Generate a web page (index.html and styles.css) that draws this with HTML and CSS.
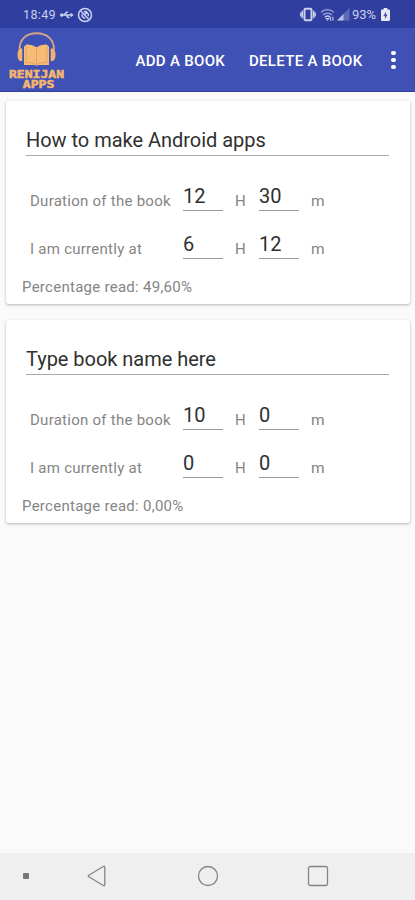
FILE: index.html
```html
<!DOCTYPE html>
<html lang="en">
<head>
<meta charset="utf-8">
<meta name="viewport" content="width=device-width">
<title>Book progress</title>
<link rel="stylesheet" href="styles.css">
</head>
<body>
<div class="screen">
  <header class="status">
    <span class="clock">18:49</span>
    <svg class="usb" width="14" height="12" viewBox="0 0 14 12" fill="none" stroke="currentColor" stroke-width="1.4"><path d="M2 6h9M4 6l2.500-2.800h1.500M6 6l2 2.500h1.500"/><circle cx="1.800" cy="6" r="1.100" fill="currentColor"/><path d="M10.500 3.800 13.800 6l-3.300 2.200z" fill="currentColor" stroke="none"/></svg>
    <svg class="nosync" width="16" height="16" viewBox="0 0 16 16" fill="none" stroke="currentColor" stroke-width="1.500"><circle cx="8" cy="8" r="6.500"/><path d="M4 4.300 11.500 12M5 7.400a3.300 3.300 0 0 0 3.200 3.800M7 4.800a3.400 3.400 0 0 1 4.200 4.400M7.500 7.200 9.800 6"/></svg>
    <span class="gap"></span>
    <svg class="vibrate" width="16" height="15" viewBox="0 0 16 15" fill="none" stroke="currentColor"><rect x="4.500" y="1.800" width="7" height="11.400" rx="1" stroke-width="2"/><path d="M2.300 3.800v7.400M13.700 3.800v7.400M.8 5.500v4M15.200 5.500v4" stroke-width="1.400"/></svg>
    <svg class="wifi" width="15" height="14" viewBox="0 0 15 14" fill="none" stroke="currentColor" stroke-width="1.300"><path d="M1 4.400a9.200 9.200 0 0 1 13 0M3 7a6.400 6.400 0 0 1 9 0" opacity=".7"/><path d="M5 9.200a3.600 3.600 0 0 1 5 0"/><path d="m6 10.500 1.500 2 1.500-2zM10.700 8.800v4M12.900 8.800v4" stroke-width="1"/></svg>
    <svg class="signal" width="13" height="13" viewBox="0 0 13 13" fill="currentColor"><path d="M0 12.500 12.500 0v12.500z" opacity=".3"/><path d="M0 12.500 6.500 6v6.500z" opacity=".85"/></svg>
    <span class="percent">93%</span>
    <svg class="battery" width="9" height="13" viewBox="0 0 9 13"><path d="M2.700 0h3.600v1.400h1.500Q9 1.400 9 2.600v9Q9 13 7.800 13H1.200Q0 13 0 11.700V2.600Q0 1.400 1.200 1.400h1.500z" fill="currentColor"/><path d="M5.300 3.500 2.400 7.700h1.700L3.700 11l2.900-4.200H4.900z" fill="#303f9f"/></svg>
  </header>
  <nav class="toolbar">
    <svg class="logo" width="60" height="62" viewBox="0 0 60 62">
      <path d="M11.500 20.500C11.500 10.500 18 4.300 28.500 4.300S46 10.500 46 20.500" fill="none" stroke="#d6a487" stroke-width="1.900"/>
      <path d="M12 19.500h2.300v12.500H12Q9.500 30.500 9.500 25.700t2.500-6.200zM45 19.500h-2.300v12.500H45q2.500-1.500 2.500-6.300t-2.500-6.200z" fill="#efb471"/>
      <path d="M16 17.800 18.500 15.500q5.500-.4 10 2.800Q33 15.100 38.500 15.500l2.500 2.300V36H30.500q-2 1.200-4 0H16z" fill="#f7bc73"/>
      <path d="M28.500 18.800v16M18.200 17.500v16q5.500-.4 10.300 2 4.800-2.400 10.300-2v-16" fill="none" stroke="#d79c6d" stroke-width=".8"/>
      <g class="brand">
        <text x="1" y="48.700" textLength="55" lengthAdjust="spacingAndGlyphs">RENIJAN</text>
        <text x="14.800" y="59.200" textLength="31.500" lengthAdjust="spacingAndGlyphs">APPS</text>
      </g>
    </svg>
    <button class="action add">ADD A BOOK</button>
    <button class="action delete">DELETE A BOOK</button>
    <button class="more" aria-label="More options"><i></i><i></i><i></i></button>
  </nav>
  <main class="books">
    <section class="card">
      <div class="title">How to make Android apps</div>
      <div class="row"><span class="label">Duration of the book</span><span class="field">12</span><span class="unit hours">H</span><span class="field">30</span><span class="unit minutes">m</span></div>
      <div class="row"><span class="label">I am currently at</span><span class="field">6</span><span class="unit hours">H</span><span class="field">12</span><span class="unit minutes">m</span></div>
      <div class="result">Percentage read: 49,60%</div>
    </section>
    <section class="card">
      <div class="title">Type book name here</div>
      <div class="row"><span class="label">Duration of the book</span><span class="field">10</span><span class="unit hours">H</span><span class="field">0</span><span class="unit minutes">m</span></div>
      <div class="row"><span class="label">I am currently at</span><span class="field">0</span><span class="unit hours">H</span><span class="field">0</span><span class="unit minutes">m</span></div>
      <div class="result">Percentage read: 0,00%</div>
    </section>
  </main>
  <footer class="navbar">
    <span class="dot"></span>
    <svg class="back" width="20" height="22" viewBox="0 0 20 22" fill="none" stroke="#858585" stroke-width="1.300"><path d="M1.800 10.200 16.300 1.500q1.500-.7 1.500 1v17q0 1.700-1.500 1L1.800 11.800q-1.200-.8 0-1.600z"/></svg>
    <svg class="home" width="22" height="22" viewBox="0 0 22 22" fill="none" stroke="#858585" stroke-width="1.300"><circle cx="11" cy="11" r="9.500"/></svg>
    <svg class="recent" width="22" height="22" viewBox="0 0 22 22" fill="none" stroke="#858585" stroke-width="1.300"><rect x="1.500" y="1.500" width="19" height="19" rx="1.800"/></svg>
  </footer>
</div>
</body>
</html>
```
FILE: styles.css
```css
* { box-sizing: border-box; }
body { margin: 0; font-family: Roboto, sans-serif; background: #fafafa; }
.screen { width: 415px; height: 900px; display: flex; flex-direction: column; overflow: hidden; }
.status { height: 28px; flex: none; display: flex; align-items: center; background: #303f9f; color: #c9cfee; font-size: 12.5px; padding: 1px 25px 0 23px; }
.clock { width: 33px; letter-spacing: .35px; }
.usb { margin-left: 4px; }
.nosync { margin-left: 3px; }
.gap { flex: 1; }
.wifi { margin-left: 4px; }
.signal { margin-left: 2px; }
.percent { margin-left: 2px; width: 27px; font-size: 13px; letter-spacing: -.1px; }
.battery { margin-left: 2px; color: #e8eaf8; }
.toolbar { height: 64px; flex: none; display: flex; align-items: center; background: #3f51b5; border-bottom: 1px solid #303f9f; padding-left: 8px; }
.logo { margin-top: 1px; }
.brand { font: 700 10px "DejaVu Sans Mono", monospace; fill: #f7b66e; stroke: #f7b66e; stroke-width: .5px; }
.action, .more { border: 0; padding: 0; background: none; color: #fff; }
.action { font: 500 15px Roboto, sans-serif; letter-spacing: .3px; text-align: left; white-space: nowrap; margin-top: 2px; }
.add { margin-left: 67.5px; width: 90px; }
.delete { margin-left: 23.5px; width: 115px; }
.more { margin-left: 27px; display: grid; gap: 2.5px; margin-top: 1px; }
.more i { width: 4.5px; height: 4.5px; border-radius: 50%; background: #fff; }
.books { flex: 1; display: flex; flex-direction: column; gap: 16px; padding: 9px 5px 0 6px; }
.card { height: 203px; background: #fff; border-radius: 3px; box-shadow: 0 1px 3px rgba(0,0,0,.28); padding: 23px 21px 0 20px; }
.title { height: 32px; line-height: 33px; border-bottom: 1px solid #aaa; font-size: 20px; letter-spacing: -.03px; color: #303030; white-space: nowrap; }
.row { display: flex; height: 35px; margin-top: 20px; padding-left: 4px; }
.row + .row { margin-top: 12.5px; }
.label, .unit { color: #858585; font-size: 15px; line-height: 50px; white-space: nowrap; }
.label { width: 153px; letter-spacing: .26px; }
.field { width: 40px; height: 35px; border-bottom: 1px solid #999; font-size: 20px; line-height: 40px; color: #303030; }
.hours { width: 36px; padding-left: 12px; }
.minutes { padding-left: 12px; font-size: 15.5px; }
.result { color: #858585; font-size: 15px; letter-spacing: .27px; line-height: 20px; margin: 18px 0 0 -4px; white-space: nowrap; }
.navbar { height: 47px; flex: none; display: flex; align-items: center; background: #efefef; padding: 0 0 1px 23px; }
.dot { width: 6px; height: 6px; border-radius: 1px; background: #777; }
.back { margin-left: 58px; }
.home { margin-left: 90px; }
.recent { margin-left: 88px; }
```
